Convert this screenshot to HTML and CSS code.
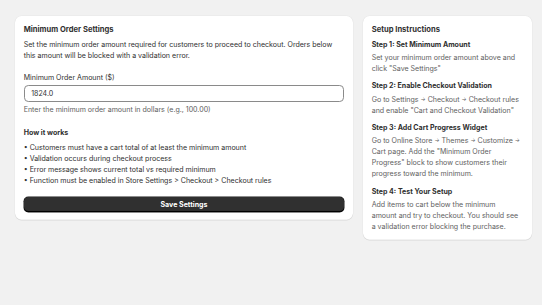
FILE: index.html
```html
<!DOCTYPE html>
<html lang="en">
<head>
<meta charset="utf-8">
<title>Minimum Order Settings</title>
<link rel="stylesheet" href="styles.css">
</head>
<body>
<div class="page">
  <section class="card main">
    <h2 class="title">Minimum Order Settings</h2>
    <p class="desc">Set the minimum order amount required for customers to proceed to checkout. Orders below this amount will be blocked with a validation error.</p>
    <label class="label" for="amount">Minimum Order Amount ($)</label>
    <div class="input"><input id="amount" type="text" value="1824.0"></div>
    <p class="help">Enter the minimum order amount in dollars (e.g., 100.00)</p>
    <h3 class="subhead">How it works</h3>
    <ul class="list">
      <li>• Customers must have a cart total of at least the minimum amount</li>
      <li>• Validation occurs during checkout process</li>
      <li>• Error message shows current total vs required minimum</li>
      <li>• Function must be enabled in Store Settings &gt; Checkout &gt; Checkout rules</li>
    </ul>
    <button class="btn" type="button">Save Settings</button>
  </section>
  <aside class="card side">
    <h2 class="title">Setup Instructions</h2>
    <div class="step">
      <h3 class="step-title">Step 1: Set Minimum Amount</h3>
      <p class="step-text">Set your minimum order amount above and click "Save Settings"</p>
    </div>
    <div class="step">
      <h3 class="step-title">Step 2: Enable Checkout Validation</h3>
      <p class="step-text">Go to Settings <span class="arr">→</span> Checkout <span class="arr">→</span> Checkout rules<br>and enable "Cart and Checkout Validation"</p>
    </div>
    <div class="step">
      <h3 class="step-title">Step 3: Add Cart Progress Widget</h3>
      <p class="step-text">Go to Online Store <span class="arr">→</span> Themes <span class="arr">→</span> Customize <span class="arr">→</span> Cart page. Add the "Minimum Order Progress" block to show customers their progress toward the minimum.</p>
    </div>
    <div class="step">
      <h3 class="step-title">Step 4: Test Your Setup</h3>
      <p class="step-text">Add items to cart below the minimum<br>amount and try to checkout. You should see<br>a validation error blocking the purchase.</p>
    </div>
  </aside>
</div>
</body>
</html>
```

FILE: styles.css
```css
* { box-sizing: border-box; }
html, body { margin: 0; padding: 0; }
body {
  background: #f1f1f1;
  font-family: Inter, "Noto Sans", sans-serif;
  font-size: 7.05px;
  line-height: 11px;
  color: #303030;
  width: 542px;
  height: 305px;
  overflow: hidden;
}
.page {
  display: flex;
  align-items: flex-start;
  gap: 10.6px;
  padding: 16px 10.3px 0 15.3px;
}
.card {
  background: #fff;
  border-radius: 6.5px;
  box-shadow: 0 0.5px 0 rgba(26,26,26,0.07), 0 0 0 0.5px rgba(0,0,0,0.04), inset 0 -0.5px 0 rgba(0,0,0,0.1);
  padding: 7.5px 8.4px 8.3px;
}
.main { width: 337.4px; flex: none; display: flex; flex-direction: column; }
.side { flex: 1; padding: 7.5px 9px 8px 8.4px; }
.title {
  margin: 0;
  font-size: 7.6px;
  line-height: 11px;
  font-weight: 650;
  color: #303030;
}
.desc { margin: 4.2px 0 0; color: #303030; }
.label { margin-top: 11px; display: block; color: #303030; }
.input {
  margin-top: 2.2px;
  height: 16.7px;
  border: 0.6px solid #8a8a8a;
  border-radius: 4.3px;
  display: flex;
  align-items: center;
  padding: 0 6.5px;
}
.input input {
  border: 0;
  outline: 0;
  padding: 0;
  margin: 0;
  width: 100%;
  font: inherit;
  color: #303030;
  background: transparent;
}
.help { margin: 2.9px 0 0; color: #616161; }
.subhead {
  margin: 11.2px 0 0;
  font-size: 7.05px;
  line-height: 11px;
  font-weight: 650;
  color: #303030;
}
.list { list-style: none; margin: 4.2px 0 0; padding: 0; color: #303030; }
.btn {
  margin-top: 11.3px;
  height: 14.6px;
  width: 100%;
  border: 0;
  border-radius: 4.3px;
  background: #303030;
  color: #fff;
  font: inherit;
  font-weight: 650;
  box-shadow: inset 0 -1px 0 #000, 0 0 0 0.5px #1a1a1a;
  padding: 0;
}
.step { margin-top: 6.5px; }
.step:first-of-type { margin-top: 4.3px; }
.step-title {
  margin: 0;
  font-size: 7.05px;
  line-height: 11px;
  font-weight: 650;
  color: #303030;
}
.step-text { margin: 2.2px 0 0; color: #616161; }
.arr {
  display: inline-block;
  font-size: 5.4px;
  line-height: 11px;
  vertical-align: top;
}
```
